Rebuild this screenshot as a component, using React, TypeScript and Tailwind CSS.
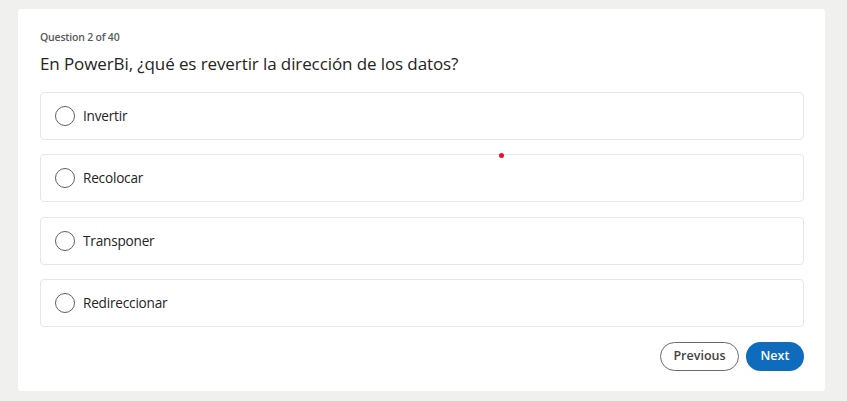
import React from "react";

const options = [
  { t: "Invertir", m: "" },
  { t: "Recolocar", m: "mt-[14px]" },
  { t: "Transponer", m: "mt-[15px]" },
  { t: "Redireccionar", m: "mt-[14px]" },
];

export default function App() {
  return (
    <div
      className="w-[847px] h-[401px] bg-[#f0f0ef] pt-[9px] pl-[18px] relative"
      style={{ fontFamily: '"Open Sans", "Noto Sans", sans-serif' }}
    >
      <div className="w-[807px] h-[382px] bg-white rounded-[3px] pl-[22px] pr-[21px] pt-[20px]">
        <div className="text-[10.5px] leading-[16px] font-semibold text-[#5a5a5a] tracking-[-0.2px]">Question 2 of 40</div>
        <div className="mt-[7px] text-[17px] leading-[24px] text-[#242424] tracking-[-0.1px]">
          En PowerBi, ¿qué es revertir la dirección de los datos?
        </div>
        <div className="mt-[16px] flex flex-col">
          {options.map((o) => (
            <div
              key={o.t}
              className={`${o.m} h-[48px] border border-[#e6e6e6] rounded-[4px] flex items-center pl-[14px]`}
            >
              <div className="w-[20px] h-[20px] rounded-full border-[1.5px] border-[#616161]" />
              <span className="ml-[8px] text-[13.6px] text-[#242424] tracking-[-0.2px]">{o.t}</span>
            </div>
          ))}
        </div>
        <div className="mt-[15px] flex justify-end gap-[7px]">
          <button className="h-[29px] w-[79px] rounded-full border border-[#6b6b6b] text-[12.5px] font-semibold text-[#424242] bg-white">
            Previous
          </button>
          <button className="h-[29px] w-[58px] rounded-full bg-[#0f6cbd] text-[12.5px] font-semibold text-white">
            Next
          </button>
        </div>
      </div>
      <div className="absolute left-[499px] top-[153px] w-[5px] h-[5px] rounded-full bg-[#e81123]" />
    </div>
  );
}
